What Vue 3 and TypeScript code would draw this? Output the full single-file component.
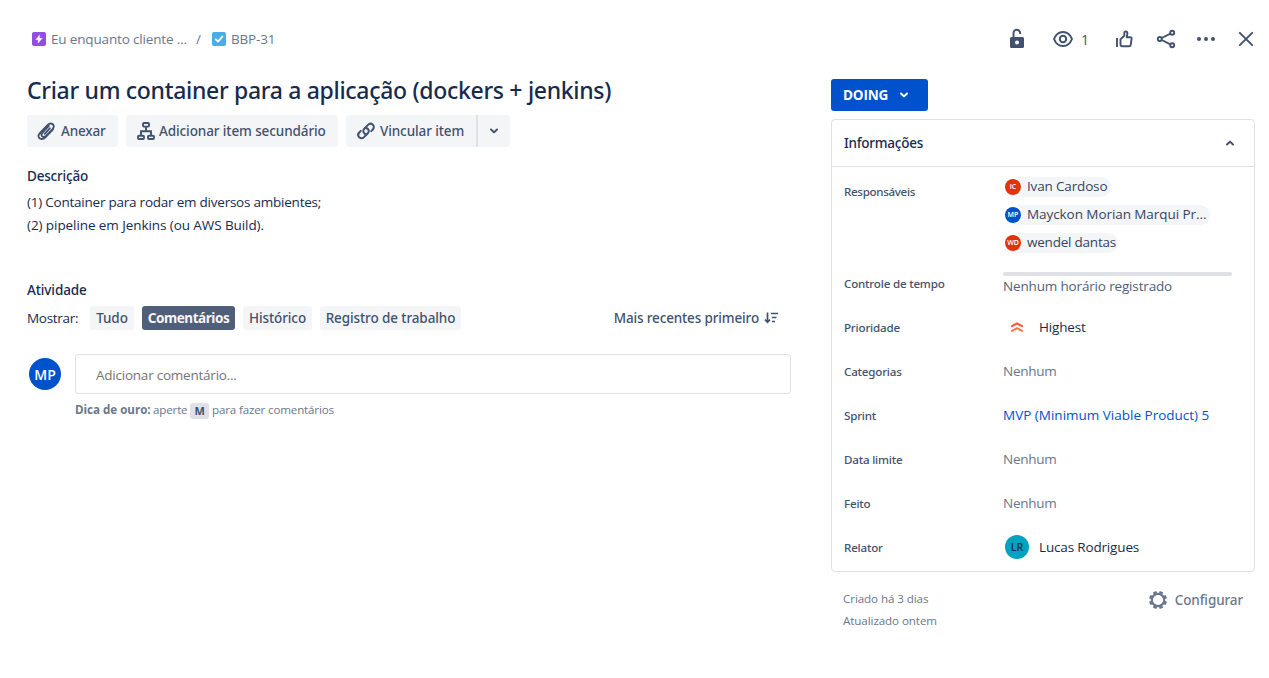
<script setup lang="ts">
interface Person { initials: string; name: string; tone: string }
interface Field { label: string; value: string; kind: 'none' | 'sprint' | 'priority' | 'person' }

const people: Person[] = [
  { initials: 'IC', name: 'Ivan Cardoso', tone: 'red' },
  { initials: 'MP', name: 'Mayckon Morian Marqui Pr...', tone: 'blue' },
  { initials: 'WD', name: 'wendel dantas', tone: 'red' },
]

const fields: Field[] = [
  { label: 'Prioridade', value: 'Highest', kind: 'priority' },
  { label: 'Categorias', value: 'Nenhum', kind: 'none' },
  { label: 'Sprint', value: 'MVP (Minimum Viable Product) 5', kind: 'sprint' },
  { label: 'Data limite', value: 'Nenhum', kind: 'none' },
  { label: 'Feito', value: 'Nenhum', kind: 'none' },
  { label: 'Relator', value: 'Lucas Rodrigues', kind: 'person' },
]

const tabs = ['Tudo', 'Comentários', 'Histórico', 'Registro de trabalho']
const activeTab = 'Comentários'
</script>

<template>
  <div class="issue">
    <header class="topbar">
      <nav class="crumbs">
        <svg class="type" width="14" height="14" viewBox="0 0 14 14">
          <rect width="14" height="14" rx="2" fill="#904ee2" />
          <path d="M7.7 2.800 3.700 7.700H6.300L6 11.300 10.300 6.300H7.500Z" fill="#fff" stroke="#fff" stroke-width=".3" />
        </svg>
        <span class="epic">Eu enquanto cliente ...</span>
        <span class="slash">/</span>
        <svg class="type" width="14" height="14" viewBox="0 0 14 14">
          <rect width="14" height="14" rx="2" fill="#4bade8" />
          <path d="M3.8 7.4 6 9.6 10.4 4.5" fill="none" stroke="#fff" stroke-width="1.9" stroke-linecap="round" stroke-linejoin="round" />
        </svg>
        <span class="key">BBP-31</span>
      </nav>
      <div class="actions">
        <svg class="lock" width="24" height="24" viewBox="0 0 24 24">
          <path d="M8.500 11V6.100a3.300 3.300 0 0 1 6.600 0V7" fill="none" stroke="#42526e" stroke-width="1.9" />
          <path fill-rule="evenodd" d="M6.500 10h11A1.500 1.500 0 0 1 19 11.500V19.500A1.500 1.500 0 0 1 17.500 21h-11A1.500 1.500 0 0 1 5 19.500V11.500A1.500 1.500 0 0 1 6.500 10ZM12 13.400a2 2 0 1 0 0 4 2 2 0 0 0 0-4Z" fill="#42526e" />
        </svg>
        <svg class="eye" width="24" height="24" viewBox="0 0 24 24" fill="none" stroke="#42526e" stroke-width="2">
          <path d="M3 12C4.800 7.500 8 5 12 5S19.200 7.500 21 12C19.200 16.500 16 19 12 19S4.800 16.500 3 12Z" stroke-linejoin="round" />
          <circle cx="12" cy="12" r="3.200" />
        </svg>
        <span class="watchers">1</span>
        <svg class="like" width="24" height="24" viewBox="0 0 24 24" fill="none" stroke="#42526e" stroke-width="1.900" stroke-linejoin="round">
          <path d="M5 11V20" stroke-linecap="butt" />
          <path d="M8.500 12.200 12.300 8.800V5.900C12.300 4 15.400 3.800 15.400 6.500L14.700 10.200H18.200Q19.800 10.200 19.600 11.800L18.700 17.800Q18.500 19.300 17 19.300H10.300Q8.500 19.300 8.500 17.500Z" />
        </svg>
        <svg class="share" width="24" height="24" viewBox="0 0 24 24" fill="none" stroke="#42526e" stroke-width="1.900">
          <circle cx="5.800" cy="12" r="2" /><circle cx="18.200" cy="5.800" r="2" /><circle cx="18.200" cy="18.200" r="2" />
          <path d="M7.700 11 16.400 6.700M7.700 13 16.400 17.300" />
        </svg>
        <svg class="more" width="24" height="24" viewBox="0 0 24 24" fill="#42526e">
          <circle cx="5" cy="12" r="2" /><circle cx="12" cy="12" r="2" /><circle cx="19" cy="12" r="2" />
        </svg>
        <svg class="close" width="24" height="24" viewBox="0 0 24 24" fill="none" stroke="#42526e" stroke-width="1.900" stroke-linecap="round">
          <path d="M5.800 5.800 18.200 18.200M18.200 5.800 5.800 18.200" />
        </svg>
      </div>
    </header>

    <div class="body">
      <main class="main">
        <h1>Criar um container para a aplicação (dockers + jenkins)</h1>

        <div class="toolbar">
          <button class="btn attach">
            <svg width="24" height="24" viewBox="0 0 24 24" fill="none" stroke="#42526e" stroke-width="1.900" stroke-linecap="round">
              <path d="M19 10.300 11.600 18.100C9 20.900 5.300 20.500 4.600 17.700 4.300 16.300 4.800 15.100 5.800 14.100L13.500 6.200C15.300 4.300 17.400 4 18.800 5.300 20.300 6.700 20 8.600 18.400 10.300L12 17C10.800 18.200 9.200 18.300 8.200 17.300 7.200 16.200 7.300 14.700 8.400 13.500L14.800 6.900M15.800 9.300 10.600 14.900" />
            </svg>
            <span>Anexar</span>
          </button>
          <button class="btn child">
            <svg width="24" height="24" viewBox="0 0 24 24" fill="none" stroke="#42526e" stroke-width="1.900">
              <rect x="9" y="4" width="6" height="3.600" rx="1" /><rect x="4" y="16.800" width="6" height="3.200" rx="1" /><rect x="14" y="16.800" width="6" height="3.200" rx="1" />
              <path d="M12 7.600V12M7 16.800V12.200H17V16.800" />
            </svg>
            <span>Adicionar item secundário</span>
          </button>
          <div class="split">
            <button class="btn link">
              <svg width="24" height="24" viewBox="0 0 24 24" fill="none" stroke="#42526e" stroke-width="2" stroke-linecap="round">
                <path d="M12.800 15.300C10.700 15.400 8.800 13.300 9.400 11.200 9.600 10.600 9.900 10.100 10.300 9.700L14 5.900C15.500 4.400 17.500 4.500 18.800 5.700 20.200 7.100 20.200 9.100 18.800 10.500L17.200 12.100" />
                <path d="M11.200 8.900C13.400 8.700 15.200 10.700 14.700 12.800 14.500 13.400 14.200 13.900 13.800 14.300L10 18.100C8.600 19.500 6.600 19.500 5.200 18.200 3.800 16.800 3.800 14.900 5.200 13.500L6.800 11.900" />
              </svg>
              <span>Vincular item</span>
            </button>
            <button class="btn caret">
              <svg width="10" height="8" viewBox="0 0 10 8"><path d="M2 2.500 5 5.400 8 2.500" fill="none" stroke="#42526e" stroke-width="2" stroke-linecap="round" stroke-linejoin="round" /></svg>
            </button>
          </div>
        </div>

        <h2 class="desc-title">Descrição</h2>
        <p class="desc one">(1) Container para rodar em diversos ambientes;</p>
        <p class="desc two">(2) pipeline em Jenkins (ou AWS Build).</p>

        <h2 class="act-title">Atividade</h2>
        <div class="filters">
          <span class="show">Mostrar:</span>
          <button v-for="(tab, i) in tabs" :key="tab" class="tab" :class="['tab' + i, { active: tab === activeTab }]">{{ tab }}</button>
          <div class="sort">
            <span>Mais recentes primeiro</span>
            <svg width="15" height="12" viewBox="0 0 15 12" fill="none" stroke="#42526e">
              <path d="M3.500 .5V10M1 7.700 3.500 10.200 6 7.700" stroke-width="1.700" />
              <path d="M6.800 1.500H14M7.800 5.500H12.500M8 9.500H11" stroke-width="1.600" />
            </svg>
          </div>
        </div>

        <div class="composer">
          <div class="avatar large blue">MP</div>
          <div class="input">Adicionar comentário...</div>
        </div>
        <p class="hint"><b>Dica de ouro:</b><span class="press">aperte</span><kbd>M</kbd><span class="rest">para fazer comentários</span></p>
      </main>

      <aside class="side">
        <button class="status">
          <span>DOING</span>
          <svg width="10" height="8" viewBox="0 0 10 8"><path d="M2 2.500 5 5.400 8 2.500" fill="none" stroke="#fff" stroke-width="2" stroke-linecap="round" stroke-linejoin="round" /></svg>
        </button>

        <section class="panel">
          <div class="panel-head">
            <span>Informações</span>
            <svg width="10" height="8" viewBox="0 0 10 8"><path d="M2 5.500 5 2.600 8 5.500" fill="none" stroke="#42526e" stroke-width="2" stroke-linecap="round" stroke-linejoin="round" /></svg>
          </div>
          <div class="row people-row">
            <span class="label">Responsáveis</span>
            <div class="people">
              <div v-for="(p, i) in people" :key="p.initials" class="pill" :class="'pill' + i">
                <span class="avatar small" :class="p.tone">{{ p.initials }}</span>
                <span class="name">{{ p.name }}</span>
              </div>
            </div>
          </div>
          <div class="row time-row">
            <span class="label">Controle de tempo</span>
            <div class="time">
              <div class="track"></div>
              <span>Nenhum horário registrado</span>
            </div>
          </div>
          <div v-for="f in fields" :key="f.label" class="row">
            <span class="label">{{ f.label }}</span>
            <div class="value" :class="f.kind">
              <svg v-if="f.kind === 'priority'" class="prio" width="16" height="16" viewBox="0 0 16 16" fill="none" stroke-width="2" stroke-linecap="round" stroke-linejoin="round">
                <path d="M3 7.200 8 4.500 13 7.200" stroke="#ff5630" /><path d="M3 11.900 8 9.200 13 11.900" stroke="#ff7452" />
              </svg>
              <span v-if="f.kind === 'person'" class="avatar mid teal">LR</span>
              <span>{{ f.value }}</span>
            </div>
          </div>
        </section>

        <footer class="foot">
          <div class="dates">
            <div>Criado há 3 dias</div>
            <div>Atualizado ontem</div>
          </div>
          <div class="config">
            <svg width="20" height="20" viewBox="-10 -10 20 20" fill="none" stroke="#6b778c">
              <circle r="6.200" stroke-width="2.200" />
              <g stroke-width="3.600">
                <path v-for="a in 8" :key="a" d="M0-6.200V-9" :transform="`rotate(${a * 45 + 22.5})`" />
              </g>
            </svg>
            <span>Configurar</span>
          </div>
        </footer>
      </aside>
    </div>
  </div>
</template>

<style>
body { margin: 0; background: #fff; }
</style>

<style scoped>
* { box-sizing: border-box; }
.issue { width: 1269px; height: 678px; overflow: hidden; font-family: "Open Sans", "Noto Sans", sans-serif; font-size: 13.5px; letter-spacing: -.16px; color: #172b4d; white-space: nowrap; }
svg { display: block; flex: none; }
button { border: 0; margin: 0; padding: 0; font: inherit; letter-spacing: inherit; color: inherit; }
h1, h2, p { margin: 0; font-weight: 500; }
h1, h2, .btn, .tab, .sort, .label, .panel-head, .config { font-family: "Noto Sans", "Open Sans", sans-serif; font-weight: 500; }

.topbar { height: 78px; display: flex; justify-content: space-between; padding: 19px 11px 0 32px; }
.crumbs { display: flex; align-items: center; height: 40px; color: #6b778c; }
.epic { width: 144px; padding-left: 5px; }
.slash { width: 17px; margin-left: 5px; padding-left: 1px; }
.key { padding-left: 5px; }
.actions { display: flex; align-items: center; height: 40px; }
.lock { margin-right: 22px; }
.watchers { width: 37px; padding-left: 6px; color: #42526e; font-size: 14px; }
.like { margin-right: 18px; }
.share, .more { margin-right: 16px; }

.body { display: flex; justify-content: space-between; padding: 0 14px 0 27px; }
.main { width: 764px; }
h1 { font-size: 23px; line-height: 24px; letter-spacing: -.31px; }
.toolbar { display: flex; gap: 8px; margin-top: 13px; color: #42526e; }
.btn { display: flex; align-items: center; height: 32px; border-radius: 3px; background: #f4f5f7; letter-spacing: -.1px; }
.attach { width: 91px; padding-left: 7px; gap: 3px; letter-spacing: -.15px; }
.child { width: 212px; padding-left: 8px; gap: 1px; }
.split { display: flex; }
.link { width: 131px; padding-left: 8px; gap: 2px; border-radius: 3px 0 0 3px; border-right: 1px solid #dfe1e6; }
.caret { width: 33px; justify-content: center; border-left: 1px solid #dfe1e6; border-radius: 0 3px 3px 0; }

h2 { font-size: 13.5px; line-height: 20px; letter-spacing: -.2px; }
.desc-title { margin-top: 19px; }
.desc { line-height: 23px; font-weight: 400; }
.one { margin-top: 5px; letter-spacing: -.23px; }
.two { letter-spacing: -.08px; }
.act-title { margin-top: 43px; letter-spacing: -.1px; }
.filters { display: flex; height: 24px; margin-top: 6px; line-height: 24px; }
.show { width: 63px; letter-spacing: -.3px; }
.tab { height: 24px; margin-right: 8px; border-radius: 3px; background: #f4f5f7; color: #42526e; text-align: center; letter-spacing: -.1px; }
.tab0 { width: 44px; }
.tab1 { width: 93px; letter-spacing: -.42px; }
.tab2 { width: 69px; }
.tab3 { width: 141px; }
.tab.active { background: #505f79; color: #f4f5f7; font-weight: 700; }
.sort { display: flex; align-items: center; gap: 5px; margin-left: auto; margin-right: 12px; color: #42526e; letter-spacing: -.14px; }

.composer { display: flex; align-items: center; height: 40px; margin-top: 24px; padding-left: 2px; }
.input { flex: 1; height: 40px; margin-left: 14px; padding-left: 20px; border: 1px solid #dfe1e6; border-radius: 3px; line-height: 41px; letter-spacing: -.23px; color: #757575; }
.avatar { display: flex; align-items: center; justify-content: center; flex: none; border-radius: 50%; color: #fff; font-weight: 600; letter-spacing: 0; }
.large { width: 32px; height: 32px; font-size: 14px; }
.mid { width: 24px; height: 24px; margin: 0 10px 0 2px; font-size: 10.5px; }
.small { width: 16px; height: 16px; font-size: 7px; box-shadow: 0 0 0 2px #fff; }
.blue { background: #0052cc; }
.red { background: #de350b; }
.teal { background: #00a3bf; color: #172b4d; }
.hint { display: flex; align-items: center; height: 16px; margin: 9px 0 0 48px; font-size: 11.6px; line-height: 14px; color: #6b778c; font-weight: 400; }
.hint b, .hint span { padding-bottom: 2px; }
.hint b { width: 78px; letter-spacing: -.02px; }
.press { width: 37px; }
kbd { width: 19px; height: 16px; margin-right: 3px; border-radius: 3px; background: #dfe1e6; color: #42526e; font: 700 11px/16px "Open Sans", sans-serif; text-align: center; }

.side { width: 424px; padding-top: 1px; }
.status { display: flex; align-items: center; width: 97px; height: 32px; padding-left: 12px; gap: 11px; border-radius: 3px; background: #0052cc; color: #fff; font-weight: 700; }
.panel { height: 453px; margin-top: 8px; border: 1px solid #dfe1e6; border-radius: 4px; }
.panel-head { display: flex; align-items: center; justify-content: space-between; height: 47px; padding: 0 19px 0 12px; border-bottom: 1px solid #dfe1e6; letter-spacing: -.25px; }
.row { display: flex; align-items: center; height: 44px; padding-left: 12px; }
.label { width: 159px; font-size: 11.6px; color: #42526e; letter-spacing: -.2px; }
.people-row { height: 97px; align-items: flex-start; padding-top: 10px; }
.people-row .label { line-height: 29px; letter-spacing: -.33px; }
.people { display: flex; flex-direction: column; align-items: flex-start; gap: 8px; padding-left: 2px; }
.pill { display: flex; align-items: center; height: 20px; padding-right: 4px; gap: 6px; border-radius: 10px; background: #f4f5f7; line-height: 18px; color: #344563; }
.name { padding-bottom: 2px; }
.pill1 { letter-spacing: -.07px; }
.pill2 { padding-right: 2px; letter-spacing: -.22px; }
.time-row { height: 41px; align-items: flex-start; padding-top: 8px; }
.time-row .label { line-height: 24px; }
.time { width: 229px; line-height: 20px; color: #505f79; }
.track { height: 4px; border-radius: 2px; background: #dfe1e6; }
.value { display: flex; align-items: center; }
.none { color: #6b778c; letter-spacing: -.25px; }
.sprint { color: #0052cc; letter-spacing: 0; }
.prio { margin: 0 14px 0 6px; }

.foot { display: flex; justify-content: space-between; padding: 16px 12px 0; color: #6b778c; }
.dates { font-size: 11.6px; line-height: 22px; letter-spacing: -.08px; }
.config { display: flex; align-items: center; height: 24px; gap: 7px; letter-spacing: -.12px; }
</style>
